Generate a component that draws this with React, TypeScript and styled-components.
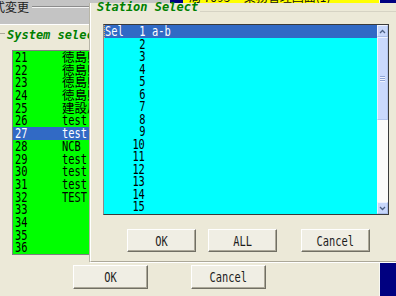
import React from "react";
import styled, { createGlobalStyle } from "styled-components";

const Global = createGlobalStyle`
  html, body { margin: 0; padding: 0; background: #000080; }
  body { width: 396px; height: 296px; overflow: hidden; font-family: "DejaVu Sans Mono", monospace; }
`;

const Screen = styled.div`
  position: relative;
  width: 396px;
  height: 296px;
  overflow: hidden;
  background: #000080;
`;

const MainWindow = styled.div`
  width: 380px;
  height: 296px;
  box-sizing: border-box;
  background: #ece9d8;
  border-right: 1px solid #f8f8f4;
  display: flex;
  flex-direction: column;
`;

const TopStrip = styled.div`
  display: flex;
  height: 24px;
  border-bottom: 1px solid #ffffff;
  flex: none;
`;

const GrayPane = styled.div`
  width: 170px;
  background: #c4c4c4;
  display: flex;
  align-items: flex-start;
  overflow: hidden;
`;

const FrameTitle = styled.span`
  font-family: "Noto Sans CJK JP", sans-serif;
  font-size: 12px;
  line-height: 14px;
  color: #202020;
  margin-left: -7px;
  white-space: nowrap;
`;

const FrameLine = styled.div`
  flex: 1;
  margin: 6px 0 0 3px;
  border-top: 1px solid #8c8c8c;
  border-bottom: 1px solid #f4f4f4;
`;

const NavyCell = styled.div`
  width: 13px;
  background: #000080;
`;

const YellowPane = styled.div`
  flex: 1;
  background: #ffff00;
  overflow: hidden;
`;

const YellowText = styled.div`
  font-family: "Noto Sans CJK JP", sans-serif;
  font-size: 12px;
  line-height: 12px;
  margin-top: -9px;
  padding-left: 6px;
  color: #101010;
  white-space: pre;
`;

const Body = styled.div`
  flex: 1;
  display: flex;
  flex-direction: column;
`;

const GroupHead = styled.div`
  display: flex;
  align-items: flex-start;
  height: 11px;
  margin-top: 5px;
`;

const GroupTick = styled.div`
  width: 5px;
  margin-top: 3px;
  border-top: 1px solid #aca899;
`;

const GroupTitle = styled.span`
  margin-left: 2px;
  font-family: "DejaVu Sans Mono", monospace;
  font-size: 12px;
  line-height: 11px;
  font-weight: bold;
  font-style: italic;
  color: #008000;
  white-space: pre;
`;

const GreenList = styled.div`
  margin: 9px 0 0 12px;
  width: 78px;
  box-sizing: border-box;
  border: 1px solid #7f7f7f;
  border-right: none;
  background: #00ff00;
  display: flex;
  flex-direction: column;
  overflow: hidden;
`;

const GreenRow = styled.div<{ $sel?: boolean }>`
  display: flex;
  height: 12.7px;
  line-height: 12.7px;
  background: ${(p) => (p.$sel ? "#316ac5" : "transparent")};
  color: ${(p) => (p.$sel ? "#ffffff" : "#000000")};
  white-space: nowrap;
`;

const NumCell = styled.div`
  width: 47px;
  padding-left: 2px;
  flex: none;
`;

const LabelCell = styled.div`
  flex: 1;
  overflow: hidden;
`;

const Narrow = styled.span<{ $origin?: string }>`
  display: inline-block;
  font-family: "DejaVu Sans Mono", monospace;
  font-size: 14px;
  transform: scaleX(0.74);
  transform-origin: ${(p) => p.$origin ?? "left"} center;
  white-space: pre;
`;

const Kanji = styled.span`
  font-family: "Noto Sans CJK JP", sans-serif;
  font-size: 12.5px;
  white-space: pre;
`;

const MainButtons = styled.div`
  display: flex;
  gap: 43px;
  margin-top: 10px;
  padding-left: 73px;
`;

const Button = styled.div<{ $w: number; $h: number; $push?: number }>`
  width: ${(p) => p.$w}px;
  height: ${(p) => p.$h}px;
  margin-left: ${(p) => p.$push ?? 0}px;
  box-sizing: border-box;
  background: #f0eee4;
  border-top: 1px solid #ffffff;
  border-left: 1px solid #ffffff;
  border-right: 1px solid #716f64;
  border-bottom: 1px solid #716f64;
  box-shadow: inset -1px -1px 0 #aca899;
  display: flex;
  align-items: center;
  justify-content: center;
  color: #1c1c1c;
  line-height: 14px;
`;

const Dialog = styled.div`
  position: absolute;
  left: 90px;
  top: 3px;
  width: 330px;
  height: 259px;
  box-sizing: border-box;
  background: #ece9d8;
  border-left: 1px solid #ffffff;
  border-bottom: 1px solid #aca899;
  box-shadow: -1px 0 0 #b8b6a8, 0 1px 0 #ffffff;
  display: flex;
  flex-direction: column;
`;

const DialogHead = styled.div`
  display: flex;
  align-items: flex-end;
  height: 10px;
  margin-top: -1px;
  padding-left: 6px;
`;

const DialogTitle = styled.span`
  font-family: "DejaVu Sans Mono", monospace;
  font-size: 12px;
  line-height: 10px;
  font-weight: bold;
  font-style: italic;
  color: #008000;
  white-space: pre;
`;

const HeadLine = styled.div`
  flex: 1;
  margin-left: 2px;
  border-bottom: 1px solid #d6d3c4;
`;

const ListBox = styled.div`
  margin: 12px 0 0 12px;
  width: 286px;
  height: 191px;
  box-sizing: border-box;
  border: 1px solid #3a3a3a;
  border-left-color: #8a8a8a;
  display: flex;
`;

const Items = styled.div`
  flex: 1;
  background: #00ffff;
  overflow: hidden;
  display: flex;
  flex-direction: column;
`;

const CyanRow = styled.div<{ $sel?: boolean }>`
  display: flex;
  height: 12.5px;
  line-height: 12.5px;
  flex: none;
  background: ${(p) => (p.$sel ? "#316ac5" : "transparent")};
  color: ${(p) => (p.$sel ? "#ffffff" : "#000000")};
  border-left: 1px dotted ${(p) => (p.$sel ? "#e8b060" : "transparent")};
  box-sizing: border-box;
`;

const SelCell = styled.div`
  width: 17px;
  flex: none;
`;

const NoCell = styled.div`
  width: 23px;
  flex: none;
  text-align: right;
`;

const AbCell = styled.div`
  margin-left: 7px;
`;

const ScrollBar = styled.div`
  width: 11px;
  flex: none;
  display: flex;
  flex-direction: column;
  background: #fbfbfa;
`;

const ScrollBtn = styled.div`
  height: 12px;
  flex: none;
  box-sizing: border-box;
  background: #c8d7fb;
  border: 1px solid #eef3ff;
  border-right-color: #a9bde9;
  border-bottom-color: #a9bde9;
  display: flex;
  align-items: center;
  justify-content: center;
`;

const Thumb = styled.div`
  height: 83px;
  flex: none;
  box-sizing: border-box;
  background: #cad9fd;
  border: 1px solid #eef3ff;
  border-right-color: #b3c5ee;
  border-bottom-color: #b3c5ee;
  display: flex;
  flex-direction: column;
  align-items: center;
  justify-content: center;
  gap: 1px;
`;

const Grip = styled.div`
  width: 5px;
  height: 1px;
  background: #8fa5d6;
  box-shadow: 0 1px 0 #f0f4ff;
`;

const Track = styled.div`
  flex: 1;
`;

const DialogButtons = styled.div`
  display: flex;
  gap: 12px;
  margin-top: 14px;
  padding-left: 36px;
`;

const greenRows: { n: string; label?: string; kanji?: boolean }[] = [
  { n: "21", label: "徳島県", kanji: true },
  { n: "22", label: "徳島県", kanji: true },
  { n: "23", label: "徳島県", kanji: true },
  { n: "24", label: "徳島県", kanji: true },
  { n: "25", label: "建設局", kanji: true },
  { n: "26", label: "test" },
  { n: "27", label: "test" },
  { n: "28", label: "NCB" },
  { n: "29", label: "test" },
  { n: "30", label: "test" },
  { n: "31", label: "test" },
  { n: "32", label: "TEST" },
  { n: "33" },
  { n: "34" },
  { n: "35" },
  { n: "36" },
];

const stations = Array.from({ length: 15 }, (_, i) => i + 1);

const Chevron = ({ up }: { up?: boolean }) => (
  <svg width="7" height="5" viewBox="0 0 7 5">
    <path
      d={up ? "M1 4 L3.5 1.5 L6 4" : "M1 1 L3.5 3.5 L6 1"}
      fill="none"
      stroke="#4d6185"
      strokeWidth="1.3"
    />
  </svg>
);

export default function App() {
  return (
    <>
      <Global />
      <Screen>
        <MainWindow>
          <TopStrip>
            <GrayPane>
              <FrameTitle>式変更</FrameTitle>
              <FrameLine />
            </GrayPane>
            <NavyCell />
            <YellowPane>
              <YellowText>局 7095     業務管理画面(1)</YellowText>
            </YellowPane>
          </TopStrip>
          <Body>
            <GroupHead>
              <GroupTick />
              <GroupTitle>System select</GroupTitle>
            </GroupHead>
            <GreenList>
              {greenRows.map((r) => (
                <GreenRow key={r.n} $sel={r.n === "27"}>
                  <NumCell>
                    <Narrow>{r.n}</Narrow>
                  </NumCell>
                  <LabelCell>
                    {r.label &&
                      (r.kanji ? <Kanji>{r.label}</Kanji> : <Narrow>{r.label}</Narrow>)}
                  </LabelCell>
                </GreenRow>
              ))}
            </GreenList>
            <MainButtons>
              <Button $w={75} $h={24}>
                <Narrow $origin="center">OK</Narrow>
              </Button>
              <Button $w={75} $h={24}>
                <Narrow $origin="center">Cancel</Narrow>
              </Button>
            </MainButtons>
          </Body>
        </MainWindow>

        <Dialog>
          <DialogHead>
            <DialogTitle>Station Select</DialogTitle>
            <HeadLine />
          </DialogHead>
          <ListBox>
            <Items>
              {stations.map((s) => (
                <CyanRow key={s} $sel={s === 1}>
                  <SelCell>{s === 1 && <Narrow>Sel</Narrow>}</SelCell>
                  <NoCell>
                    <Narrow $origin="right">{String(s)}</Narrow>
                  </NoCell>
                  {s === 1 && (
                    <AbCell>
                      <Narrow>a-b</Narrow>
                    </AbCell>
                  )}
                </CyanRow>
              ))}
            </Items>
            <ScrollBar>
              <ScrollBtn>
                <Chevron up />
              </ScrollBtn>
              <Thumb>
                <Grip />
                <Grip />
                <Grip />
              </Thumb>
              <Track />
              <ScrollBtn>
                <Chevron />
              </ScrollBtn>
            </ScrollBar>
          </ListBox>
          <DialogButtons>
            <Button $w={69} $h={23}>
              <Narrow $origin="center">OK</Narrow>
            </Button>
            <Button $w={69} $h={23}>
              <Narrow $origin="center">ALL</Narrow>
            </Button>
            <Button $w={69} $h={23} $push={12}>
              <Narrow $origin="center">Cancel</Narrow>
            </Button>
          </DialogButtons>
        </Dialog>
      </Screen>
    </>
  );
}
